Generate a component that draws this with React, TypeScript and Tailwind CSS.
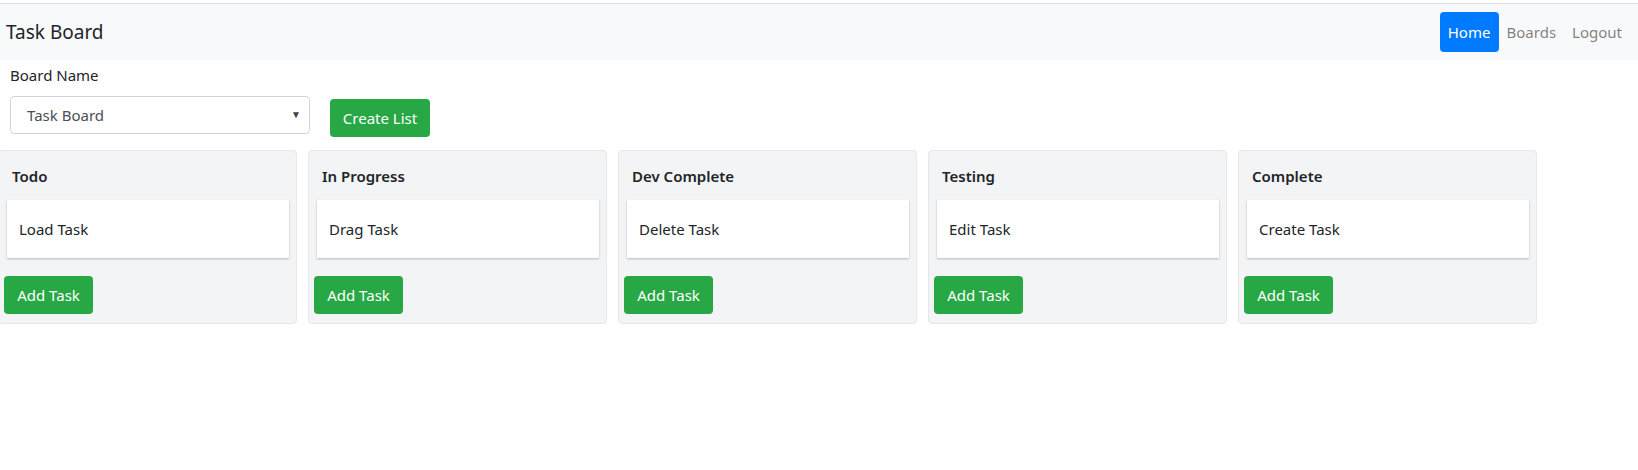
import React from "react";

const lists = [
  { title: "Todo", task: "Load Task" },
  { title: "In Progress", task: "Drag Task" },
  { title: "Dev Complete", task: "Delete Task" },
  { title: "Testing", task: "Edit Task" },
  { title: "Complete", task: "Create Task" },
];

export default function App() {
  return (
    <div className="min-h-[470px] w-[1638px] bg-white pt-[3px] text-[#212529] [font-family:'Noto_Sans',sans-serif] overflow-hidden">
      <nav className="flex h-[57px] items-center justify-between border-t border-[#dcdcdc] bg-[#f8f9fa] pl-[6px] pr-[8px]">
        <span className="text-[19px] leading-none">Task Board</span>
        <div className="flex items-center text-[15px]">
          <span className="flex h-[40px] w-[59px] items-center justify-center rounded-[4px] bg-[#007bff] text-white">Home</span>
          <span className="px-[8px] text-[rgba(0,0,0,0.5)]">Boards</span>
          <span className="px-[8px] text-[rgba(0,0,0,0.5)]">Logout</span>
        </div>
      </nav>
      <div className="pl-[10px] pt-[4px]">
        <div className="text-[15px] leading-[22px]">Board Name</div>
        <div className="mt-[10px] flex items-start gap-[20px]">
          <div className="relative flex h-[38px] w-[300px] items-center rounded-[4px] border border-[#ced4da] bg-white pl-[16px] text-[15px] text-[#495057]">
            Task Board
            <span className="absolute right-[8px] top-[10px] text-[10px] text-[#444]">▼</span>
          </div>
          <button className="mt-[3px] flex h-[38px] w-[100px] items-center justify-center rounded-[4px] bg-[#28a745] text-[15px] text-white">
            Create List
          </button>
        </div>
      </div>
      <div className="ml-[-2px] mt-[13px] flex gap-[11px]">
        {lists.map((l) => (
          <div key={l.title} className="w-[299px] rounded-[4px] border border-[#e5e7eb] bg-[#f3f4f6] pb-[9px] pt-[13px]">
            <div className="pl-[13px] text-[15px] font-semibold leading-[24px]">{l.title}</div>
            <div className="ml-[8px] mr-[7px] mt-[12px] flex h-[58px] items-center bg-white pl-[12px] text-[15px] shadow-[0_1px_2px_rgba(0,0,0,0.25)]">
              {l.task}
            </div>
            <button className="ml-[5px] mt-[18px] flex h-[38px] w-[89px] items-center justify-center rounded-[4px] bg-[#28a745] text-[15px] text-white">
              Add Task
            </button>
          </div>
        ))}
      </div>
    </div>
  );
}
